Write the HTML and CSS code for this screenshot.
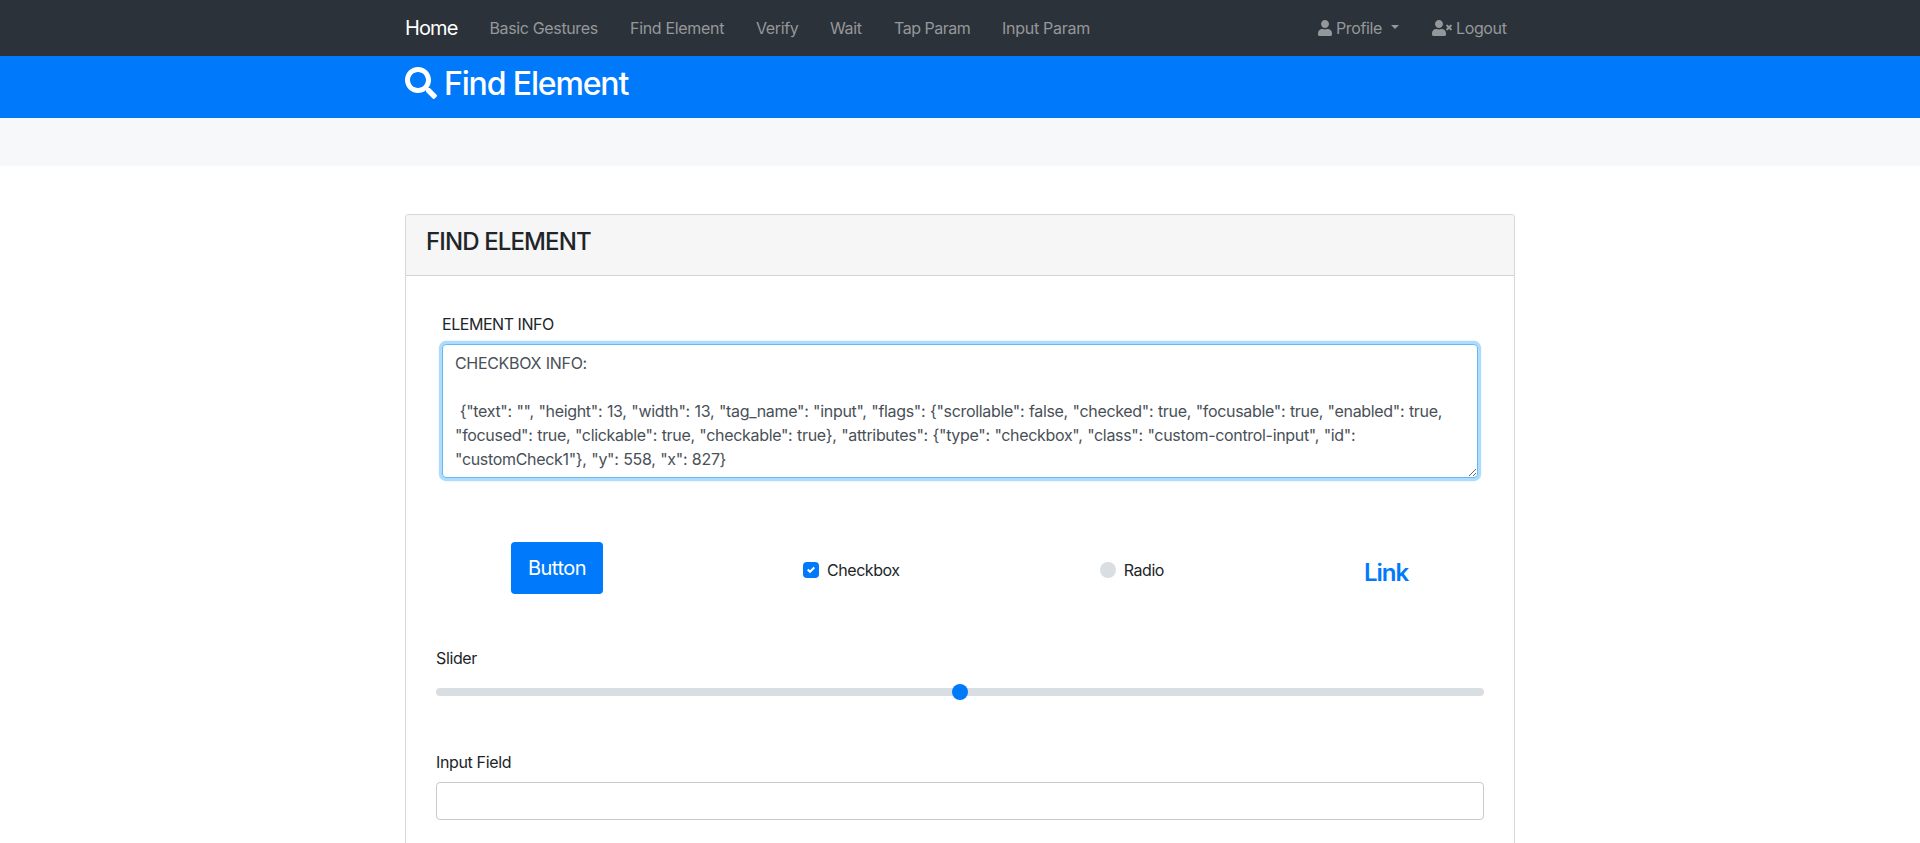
FILE: index.html
```html
<!DOCTYPE html>
<html lang="en">
<head>
<meta charset="utf-8">
<title>Find Element</title>
<link rel="stylesheet" href="styles.css">
</head>
<body>
<nav class="navbar">
  <div class="container navbar-inner">
    <a class="brand">Home</a>
    <a class="nav-link gestures">Basic Gestures</a>
    <a class="nav-link find">Find Element</a>
    <a class="nav-link verify">Verify</a>
    <a class="nav-link wait">Wait</a>
    <a class="nav-link tap">Tap Param</a>
    <a class="nav-link input-param">Input Param</a>
    <a class="nav-link profile"><svg class="icon-user" viewBox="0 0 448 512"><path d="M224 256c70.700 0 128-57.300 128-128S294.700 0 224 0 96 57.300 96 128s57.300 128 128 128zm89.600 32h-16.700c-22.200 10.200-46.900 16-72.900 16s-50.600-5.800-72.900-16h-16.700C60.200 288 0 348.200 0 422.400V464c0 26.500 21.500 48 48 48h352c26.500 0 48-21.500 48-48v-41.600c0-74.200-60.200-134.400-134.400-134.400z"/></svg><span>Profile</span><i class="caret"></i></a>
    <a class="nav-link logout"><svg class="icon-logout" viewBox="0 0 640 512"><path d="M589.600 240l45.600-45.600c6.300-6.300 6.300-16.500 0-22.800l-22.800-22.800c-6.300-6.300-16.500-6.300-22.800 0L544 194.400l-45.600-45.600c-6.300-6.300-16.500-6.300-22.800 0l-22.800 22.800c-6.300 6.300-6.300 16.500 0 22.800l45.600 45.600-45.600 45.600c-6.300 6.300-6.300 16.500 0 22.800l22.800 22.800c6.300 6.300 16.500 6.300 22.800 0l45.600-45.600 45.600 45.600c6.300 6.300 16.500 6.300 22.800 0l22.800-22.800c6.300-6.300 6.300-16.500 0-22.800L589.600 240zM224 256c70.700 0 128-57.300 128-128S294.700 0 224 0 96 57.300 96 128s57.300 128 128 128zm89.600 32h-16.700c-22.200 10.200-46.900 16-72.900 16s-50.600-5.800-72.900-16h-16.700C60.200 288 0 348.200 0 422.400V464c0 26.500 21.500 48 48 48h352c26.500 0 48-21.500 48-48v-41.600c0-74.200-60.200-134.400-134.400-134.400z"/></svg><span>Logout</span></a>
  </div>
</nav>
<header class="banner">
  <h2 class="container banner-title"><svg class="icon-search" viewBox="0 0 512 512"><path d="M505 442.700L405.300 343c-4.500-4.500-10.600-7-17-7H372c27.600-35.300 44-79.700 44-128C416 93.100 322.900 0 208 0S0 93.100 0 208s93.100 208 208 208c48.300 0 92.700-16.400 128-44v16.300c0 6.400 2.500 12.500 7 17l99.700 99.700c9.400 9.400 24.600 9.400 33.900 0l28.300-28.300c9.400-9.400 9.400-24.600.1-34zM208 336c-70.700 0-128-57.200-128-128 0-70.700 57.200-128 128-128 70.700 0 128 57.200 128 128 0 70.700-57.200 128-128 128z"/></svg><span>Find Element</span></h2>
</header>
<div class="strip"></div>
<main class="container">
  <section class="card">
    <div class="card-header"><h4 class="card-title">FIND ELEMENT</h4></div>
    <div class="card-body">
      <div class="info">
        <label class="label caps" for="info">ELEMENT INFO</label>
        <textarea class="info-text" id="info" rows="5" spellcheck="false">CHECKBOX INFO:

 {"text": "", "height": 13, "width": 13, "tag_name": "input", "flags": {"scrollable": false, "checked": true, "focusable": true, "enabled": true, "focused": true, "clickable": true, "checkable": true}, "attributes": {"type": "checkbox", "class": "custom-control-input", "id": "customCheck1"}, "y": 558, "x": 827}</textarea>
      </div>
      <div class="options">
        <button class="btn">Button</button>
        <div class="choice check-choice"><span class="box"><svg class="tick" viewBox="0 0 8 8"><path d="M6.564.75l-3.590 3.612-1.538-1.550L0 4.260l2.974 2.990L8 2.193z"/></svg></span><span>Checkbox</span></div>
        <div class="choice radio-choice"><span class="dot"></span><span>Radio</span></div>
        <a class="link">Link</a>
      </div>
      <label class="label">Slider</label>
      <div class="slider"><div class="track"><span class="thumb"></span></div></div>
      <label class="label" for="field">Input Field</label>
      <input class="field" id="field" type="text">
    </div>
  </section>
</main>
</body>
</html>
```
FILE: styles.css
```css
* { box-sizing: border-box; }
body {
  margin: 0;
  background: #fff;
  color: #212529;
  font: 400 16px/24px Inter, "Noto Sans", sans-serif;
  letter-spacing: -0.36px;
}
.container { width: 1110px; margin: 0 auto; }
.navbar { height: 56px; background: #2c3239; }
.navbar-inner { display: flex; align-items: center; height: 56px; white-space: nowrap; }
.brand { width: 84.5px; color: #fff; font-size: 20px; line-height: 30px; letter-spacing: -0.9px; }
.nav-link { color: #95989b; }
.gestures { width: 140.5px; }
.find { width: 126px; letter-spacing: -0.32px; }
.verify { width: 74px; }
.wait { width: 64px; }
.tap { width: 108px; letter-spacing: -0.5px; }
.input-param { width: 316px; letter-spacing: -0.28px; }
.profile { display: flex; align-items: center; width: 114px; }
.logout { display: flex; align-items: center; }
.icon-user { width: 14px; height: 16px; margin-right: 4px; fill: currentColor; }
.icon-logout { width: 20px; height: 16px; margin-right: 4px; fill: currentColor; }
.caret { margin-left: 9px; margin-top: -3px; border: 4.8px solid transparent; border-top-color: currentColor; border-bottom: 0; }
.banner { height: 62px; background: #007afb; color: #fff; }
.banner-title { display: flex; align-items: center; height: 56px; font-size: 32px; font-weight: 500; line-height: 38px; letter-spacing: -1.15px; }
.icon-search { width: 32px; height: 32px; margin-right: 7px; margin-top: -2px; fill: currentColor; }
.strip { height: 48px; background: #f6f8fa; }
.card { height: 629px; margin-top: 48px; border: 1px solid #d5d7d9; border-bottom: 0; border-radius: 4px 4px 0 0; }
.card-header { height: 61px; padding: 12px 20px; background: #f6f6f6; border-bottom: 1px solid #d2d3d4; border-radius: 3px 3px 0 0; }
.card-title { margin: 0; font-size: 24px; font-weight: 500; line-height: 29px; letter-spacing: -0.88px; }
.card-body { padding: 36px 30px 0; }
.info { padding: 0 6px; }
.label { display: block; margin-bottom: 8px; }
.caps { letter-spacing: -0.46px; }
.info-text {
  display: block;
  width: 1036px;
  height: 134px;
  padding: 6px 12px;
  overflow: hidden;
  color: #495057;
  font: inherit;
  letter-spacing: -0.32px;
  word-spacing: 0.5px;
  border: 1px solid #66b8fa;
  border-radius: 4px;
  box-shadow: 0 0 0 3.2px #aedcfb;
  outline: 0;
}
.options { display: flex; align-items: center; gap: 200px; height: 52px; margin: 64px 0 52px; padding-left: 75px; }
.btn { width: 92px; height: 52px; padding: 0; border: 0; border-radius: 4px; background: #007afb; color: #fff; font: inherit; font-size: 20px; letter-spacing: -0.5px; }
.choice { display: flex; align-items: center; gap: 8px; padding-top: 4px; }
.check-choice { width: 97px; letter-spacing: -0.45px; }
.radio-choice { width: 64px; letter-spacing: -0.45px; }
.box { display: flex; align-items: center; justify-content: center; width: 16px; height: 16px; border-radius: 4px; background: #007afb; }
.tick { width: 8px; height: 8px; fill: #fff; }
.dot { width: 16px; height: 16px; border-radius: 50%; background: #d9dee2; }
.link { padding-top: 8px; color: #007afb; font-size: 24px; font-weight: 600; line-height: 29px; letter-spacing: -1px; }
.slider { display: flex; align-items: center; height: 24px; margin: 10px 0 46px; }
.track { display: flex; align-items: center; justify-content: center; width: 100%; height: 8px; border-radius: 8px; background: #d9dee2; }
.thumb { width: 16px; height: 16px; border-radius: 50%; background: #007afb; }
.field { display: block; width: 100%; height: 38px; padding: 6px 12px; border: 1px solid #c5cbd1; border-radius: 4px; font: inherit; }
```
